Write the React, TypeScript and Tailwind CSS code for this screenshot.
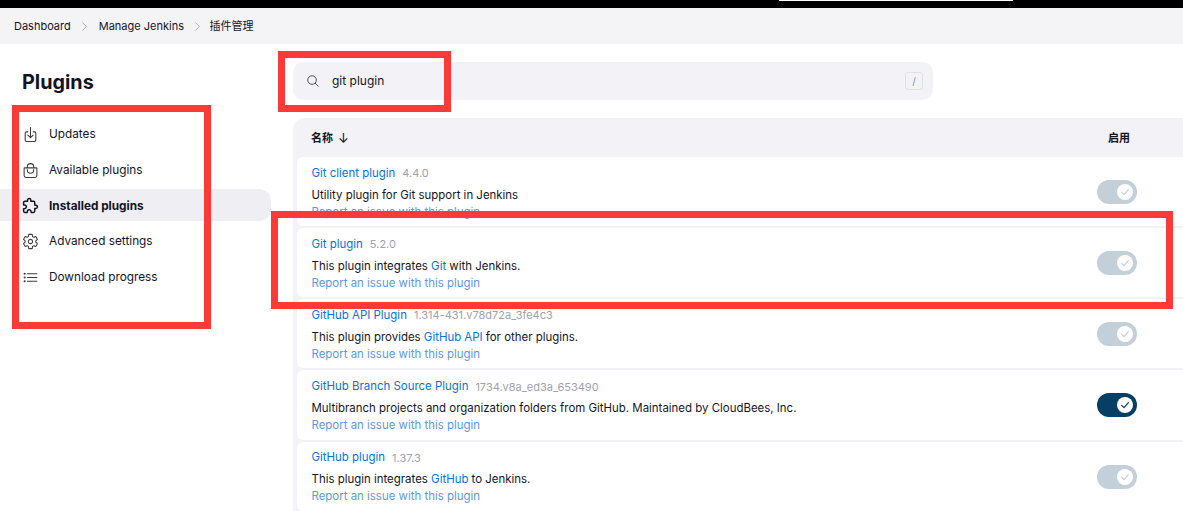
import React from "react";
import { ChevronRight } from "lucide-react";
import { IoDownloadOutline, IoBagHandleOutline, IoExtensionPuzzleOutline, IoSettingsOutline, IoListOutline, IoSearchOutline } from "react-icons/io5";

const font = { fontFamily: 'Inter, "Noto Sans CJK SC", sans-serif' };

function Toggle({ on }: { on?: boolean }) {
  return (
    <div className={"flex h-6 w-10 shrink-0 items-center justify-end rounded-full pr-1 " + (on ? "bg-[#063f66]" : "bg-[#c3d0d9]")}>
      <div className="flex h-4 w-4 items-center justify-center rounded-full bg-white">
        <svg viewBox="0 0 16 16" className="h-3 w-3" fill="none" stroke={on ? "#063f66" : "#c3d0d9"} strokeWidth="1.6" strokeLinecap="round" strokeLinejoin="round">
          <path d="M3.5 8.5 6.7 11.5 12.5 4.8" />
        </svg>
      </div>
    </div>
  );
}

const A = ({ children }: { children: React.ReactNode }) => <span className="text-[#0b6fe0]">{children}</span>;

function Row({ name, version, desc, on }: { name: string; version: string; desc: React.ReactNode; on?: boolean }) {
  return (
    <div className="flex h-[69.15px] items-start justify-between overflow-hidden rounded-l-md bg-white pl-[14.5px] pr-[46px]">
      <div className="min-w-0">
        <div className="mt-[8.4px] flex h-4 items-center gap-[7px] text-[11.45px]">
          <A>{name}</A>
          <span className="text-[11px] text-[#a1a1ac]">{version}</span>
        </div>
        <div className="mt-[5.4px] h-4 text-[11.45px] leading-4 text-[#14141f]">{desc}</div>
        <div className="mt-[1px] h-4 text-[11.45px] leading-4 text-[#5e97e8]">Report an issue with this plugin</div>
      </div>
      <div className="mt-[23px]"><Toggle on={on} /></div>
    </div>
  );
}

function NavItem({ icon, label, active, h }: { icon: React.ReactNode; label: string; active?: boolean; h: string }) {
  return (
    <div className={"flex items-center rounded-r-xl pl-[21.5px] text-[11.8px] text-[#14141f] " + h + (active ? " bg-[#eeeef3] font-bold" : " pt-px")}>
      <span className="flex w-[27.5px] shrink-0 items-center">{icon}</span>
      <span className={active ? "pt-[3px]" : ""}>{label}</span>
    </div>
  );
}

export default function App() {
  return (
    <div className="relative h-[511px] w-[1183px] overflow-hidden bg-white" style={font}>
      <div className="flex h-2 items-start bg-black pl-[779px]">
        <div className="h-px w-[234px] bg-white" />
      </div>
      <div className="flex h-9 items-center bg-[#f4f4f7] pl-[14px] text-[11px] text-[#14141f]">
        <span>Dashboard</span>
        <ChevronRight className="mx-[6.5px] h-[15px] w-[15px] text-[#a8a8b4]" strokeWidth={1.5} />
        <span>Manage Jenkins</span>
        <ChevronRight className="ml-[5.5px] mr-[5px] h-[15px] w-[15px] text-[#a8a8b4]" strokeWidth={1.5} />
        <span>插件管理</span>
      </div>
      <div className="flex">
        <aside className="w-[293px] shrink-0 pr-[22px]">
          <h1 className="ml-[22px] mt-[26px] h-6 text-[19.8px] font-bold leading-6 text-[#14141f]">Plugins</h1>
          <nav className="mt-[22px]">
            <NavItem h="h-[36px]" label="Updates" icon={<IoDownloadOutline className="h-[17px] w-[17px] text-[#3a3a44]" />} />
            <NavItem h="h-[36px]" label="Available plugins" icon={<IoBagHandleOutline className="h-[17px] w-[17px] text-[#3a3a44]" />} />
            <NavItem h="h-[32px] mt-[1px]" active label="Installed plugins" icon={<IoExtensionPuzzleOutline className="h-[17px] w-[17px] text-[#14141f] [&_path]:stroke-[44px]" />} />
            <NavItem h="h-[40px]" label="Advanced settings" icon={<IoSettingsOutline className="h-[17px] w-[17px] text-[#3a3a44]" />} />
            <NavItem h="h-[32px]" label="Download progress" icon={<IoListOutline className="h-[17px] w-[17px] text-[#3a3a44]" />} />
          </nav>
        </aside>
        <main className="min-w-0 flex-1">
          <div className="mt-[18px] flex h-[38px] w-[640px] items-center rounded-[10px] bg-[#f3f3f7] pl-[13px] pr-[10px] text-[12px] text-[#14141f]">
            <IoSearchOutline className="h-[14px] w-[14px] text-[#3a3a44]" />
            <span className="ml-[12px] flex-1">git plugin</span>
            <span className="flex h-[18px] w-[18px] items-center justify-center rounded-[3px] border border-[#e0e0e6] text-[10px] text-[#8a8a96]">/</span>
          </div>
          <div className="mt-[18px] rounded-tl-xl bg-[#f2f2f7] pl-1">
            <div className="flex h-[39px] items-center justify-between pl-[14px] pr-[53px] pt-[2px] text-[11px] font-bold text-[#14141f]">
              <span className="flex items-center gap-[5px]">名称<span className="text-[13px] font-normal">↓</span></span>
              <span>启用</span>
            </div>
            <div className="flex flex-col gap-[2px]">
              <Row name="Git client plugin" version="4.4.0" desc="Utility plugin for Git support in Jenkins" />
              <Row name="Git plugin" version="5.2.0" desc={<>This plugin integrates <A>Git</A> with Jenkins.</>} />
              <Row name="GitHub API Plugin" version="1.314-431.v78d72a_3fe4c3" desc={<>This plugin provides <A>GitHub API</A> for other plugins.</>} />
              <Row name="GitHub Branch Source Plugin" version="1734.v8a_ed3a_653490" on desc="Multibranch projects and organization folders from GitHub. Maintained by CloudBees, Inc." />
              <Row name="GitHub plugin" version="1.37.3" desc={<>This plugin integrates <A>GitHub</A> to Jenkins.</>} />
            </div>
          </div>
        </main>
      </div>
      <div className="pointer-events-none absolute left-[12px] top-[105px] h-[224px] w-[199px] border-[7px] border-[#ff3838]" />
      <div className="pointer-events-none absolute left-[278px] top-[51px] h-[61px] w-[173px] border-[7px] border-[#ff3838]" />
      <div className="pointer-events-none absolute left-[271px] top-[211px] h-[98px] w-[902px] border-[7px] border-[#ff3838]" />
    </div>
  );
}
